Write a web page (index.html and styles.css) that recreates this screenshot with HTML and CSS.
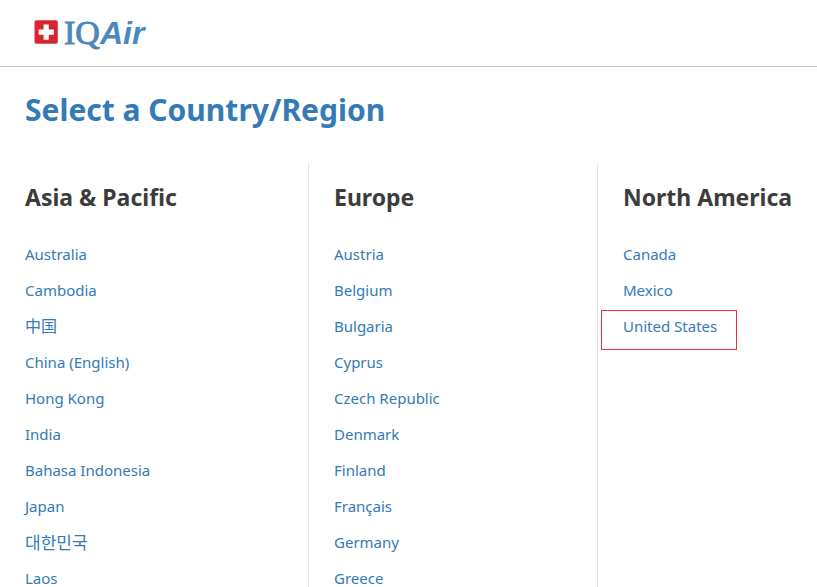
FILE: index.html
```html
<!DOCTYPE html>
<html lang="en">
<head>
<meta charset="utf-8">
<title>IQAir - Select a Country/Region</title>
<link rel="stylesheet" href="styles.css">
</head>
<body>
<header class="header">
  <a class="logo" href="#" aria-label="IQAir">
    <svg class="logo-mark" viewBox="0 0 24 24" aria-hidden="true">
      <rect x="0.5" y="0.3" width="23.3" height="23.4" rx="1.6" fill="#d8262f"/>
      <path d="M9.6 4.5h5.2v5h5v5.2h-5v5H9.6v-5h-5V9.500h5z" fill="#fff"/>
    </svg>
    <span class="logo-text"><span class="logo-iq">IQ</span><span class="logo-air">Air</span></span>
  </a>
</header>
<main>
  <h1>Select a Country/Region</h1>
  <div class="regions">
    <section class="region">
      <h2>Asia &amp; Pacific</h2>
      <ul>
        <li><a href="#">Australia</a></li>
        <li><a href="#">Cambodia</a></li>
        <li><a href="#" lang="zh-CN">中国</a></li>
        <li><a href="#">China (English)</a></li>
        <li><a href="#">Hong Kong</a></li>
        <li><a href="#">India</a></li>
        <li><a href="#">Bahasa Indonesia</a></li>
        <li><a href="#">Japan</a></li>
        <li><a href="#" lang="ko">대한민국</a></li>
        <li><a href="#">Laos</a></li>
      </ul>
    </section>
    <section class="region">
      <h2>Europe</h2>
      <ul>
        <li><a href="#">Austria</a></li>
        <li><a href="#">Belgium</a></li>
        <li><a href="#">Bulgaria</a></li>
        <li><a href="#">Cyprus</a></li>
        <li><a href="#">Czech Republic</a></li>
        <li><a href="#">Denmark</a></li>
        <li><a href="#">Finland</a></li>
        <li><a href="#">Français</a></li>
        <li><a href="#">Germany</a></li>
        <li><a href="#">Greece</a></li>
      </ul>
    </section>
    <section class="region">
      <h2>North America</h2>
      <ul>
        <li><a href="#">Canada</a></li>
        <li><a href="#">Mexico</a></li>
        <li class="marked"><a href="#">United States</a></li>
      </ul>
    </section>
  </div>
</main>
</body>
</html>
```
FILE: styles.css
```css
*, *::before { box-sizing: border-box; }
body {
  margin: 0;
  background: #fff;
  color: #3c3c3c;
  font: 15px/36px "Noto Sans", "Noto Sans CJK SC", "Noto Sans CJK KR", sans-serif;
}
a { color: #337ab7; text-decoration: none; }
.header {
  display: flex;
  align-items: center;
  height: 67px;
  padding: 0 34px 2px;
  border-bottom: 1px solid #c4c4c4;
}
.logo { display: flex; align-items: center; gap: 6px; }
.logo-mark { width: 24px; height: 24px; }
.logo-text { font-size: 34px; line-height: 40px; color: #4b88bd; }
.logo-iq { font-family: "Liberation Serif", serif; -webkit-text-stroke: 1px #4b88bd; }
.logo-air { font-family: "Liberation Sans", sans-serif; font-weight: bold; font-style: italic; font-size: 32px; }
h1 {
  margin: 0;
  padding: 20px 25px 30px;
  color: #337ab7;
  font-size: 30px;
  line-height: 46px;
}
.regions {
  display: grid;
  grid-template-columns: 308fr 289fr 220fr;
}
.region { padding: 15px 0 0 25px; }
.region + .region { border-left: 1px solid #e4e4e4; }
h2 { margin: 0 0 20px; font-size: 23px; line-height: 38px; white-space: nowrap; }
ul { margin: 0; padding: 0; list-style: none; }
li { height: 36px; }
[lang="zh-CN"] { font-size: 16px; }
[lang="ko"] { font-family: "Noto Sans CJK KR", sans-serif; font-size: 17px; }
.marked { position: relative; }
.marked::before {
  content: "";
  position: absolute;
  top: 2px;
  left: -22px;
  width: 136px;
  height: 40px;
  border: 1px solid #ed2f3b;
  pointer-events: none;
}
```
